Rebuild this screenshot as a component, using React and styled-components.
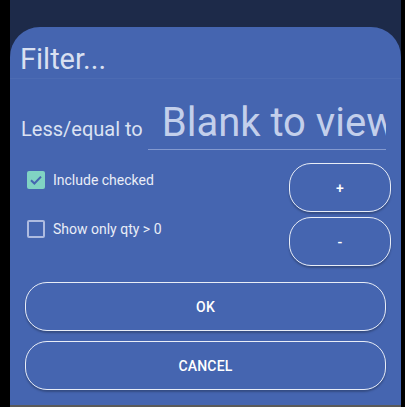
import React from 'react'
import styled, { createGlobalStyle } from 'styled-components';

const GlobalStyle = createGlobalStyle`
  html, body {
    margin: 0;
    padding: 0;
    background: #000;
  }
  body {
    font-family: Roboto, "Liberation Sans", sans-serif;
  }
`;

const Screen = styled.div`
  width: 391px;
  height: 407px;
  margin-left: 10px;
  background: #1d2a49;
  display: flex;
  flex-direction: column;
`;

const Sheet = styled.div`
  margin-top: 27px;
  flex: 1;
  background: #4565b0;
  border-radius: 30px 30px 0 0;
  display: flex;
  flex-direction: column;
`;

const BottomBar = styled.div`
  height: 2px;
  background: #5a5a5a;
`;

const Title = styled.h1`
  margin: 0;
  padding: 15px 10px 1px 10px;
  font-size: 29px;
  font-weight: 400;
  line-height: 35px;
  color: #d9e0f1;
  border-bottom: 1px solid rgba(255, 255, 255, 0.04);
`;

const InputRow = styled.div`
  display: flex;
  align-items: baseline;
  margin-top: 20px;
  padding: 0 15px 0 11px;
  gap: 5px;
`;

const Label = styled.label`
  font-size: 20px;
  color: #dbe2f2;
  white-space: nowrap;
`;

const Field = styled.input`
  flex: 1;
  min-width: 0;
  background: transparent;
  border: none;
  border-bottom: 1px solid #8399cf;
  outline: none;
  padding: 0 0 3px 14px;
  font-family: Roboto, "Liberation Sans", sans-serif;
  font-size: 40px;
  line-height: 47px;
  color: #fff;
  &::placeholder {
    color: #c3cfeb;
  }
`;

const Options = styled.div`
  display: flex;
  justify-content: space-between;
  margin-top: 13px;
  padding: 0 10px 0 17px;
`;

const Checks = styled.div`
  display: flex;
  flex-direction: column;
  gap: 15px;
`;

const CheckRow = styled.div`
  height: 34px;
  display: flex;
  align-items: center;
  gap: 8px;
  font-size: 14px;
  color: #e9edf7;
`;

const Box = styled.span`
  width: 18px;
  height: 18px;
  box-sizing: border-box;
  border-radius: 2px;
  display: flex;
  align-items: center;
  justify-content: center;
  background: ${p => (p.checked ? '#80d3c3' : 'transparent')};
  border: ${p => (p.checked ? 'none' : '2px solid #aebbe0')};
`;

const Steppers = styled.div`
  display: flex;
  flex-direction: column;
  gap: 5px;
`;

const PillButton = styled.button`
  width: ${p => p.width || '100%'};
  height: 49px;
  box-sizing: border-box;
  background: transparent;
  border: 1.5px solid #e8edf7;
  border-radius: 22px;
  box-shadow: 0 2px 2px rgba(0, 0, 0, 0.25);
  color: #fff;
  font-family: Roboto, "Liberation Sans", sans-serif;
  font-size: 14px;
  font-weight: 500;
  letter-spacing: 0.2px;
`;

const Actions = styled.div`
  display: flex;
  flex-direction: column;
  gap: 10px;
  margin-top: 16px;
  padding: 0 15px;
`;

function Checkbox({ checked, label }) {
  return (
    <CheckRow>
      <Box checked={checked}>
        {checked && (
          <svg width="14" height="14" viewBox="0 0 14 14">
            <path d="M2 7.2 L5.4 10.5 L12 3.6" fill="none" stroke="#4565b0" strokeWidth="2" />
          </svg>
        )}
      </Box>
      {label}
    </CheckRow>
  )
}

function App() {
  return (
    <>
      <GlobalStyle />
      <Screen>
        <Sheet>
          <Title>Filter...</Title>
          <InputRow>
            <Label>Less/equal to</Label>
            <Field placeholder="Blank to view all" />
          </InputRow>
          <Options>
            <Checks>
              <Checkbox checked label="Include checked" />
              <Checkbox label="Show only qty > 0" />
            </Checks>
            <Steppers>
              <PillButton width="102px">+</PillButton>
              <PillButton width="102px">-</PillButton>
            </Steppers>
          </Options>
          <Actions>
            <PillButton>OK</PillButton>
            <PillButton>CANCEL</PillButton>
          </Actions>
        </Sheet>
        <BottomBar />
      </Screen>
    </>
  )
}

export default App
